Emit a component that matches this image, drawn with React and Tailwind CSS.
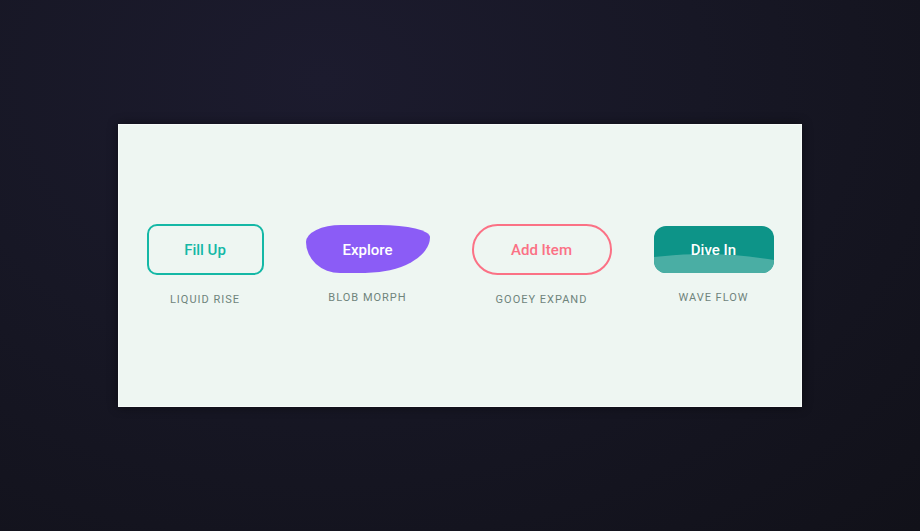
export default function App() {
  const label = "mt-[1px] text-[11px] leading-4 tracking-[1px] text-[#6f847c] uppercase";
  return (
    <div
      className="w-full h-[531px] flex items-center justify-center bg-[radial-gradient(ellipse_at_35%_15%,#1c1b2e_0%,#171725_45%,#111119_100%)]"
      style={{ fontFamily: 'Roboto, "Open Sans", sans-serif' }}
    >
      <div className="w-[684px] h-[283px] bg-[#eef6f2] border border-[#f7fbf9] shadow-[0_0_10px_rgba(0,0,0,0.45)] flex items-center justify-center gap-[42px]">
        <div className="flex flex-col items-center gap-4">
          <div className="w-[117px] h-[51px] pt-[2px] rounded-[10px] border-2 border-[#14b8a6] flex items-center justify-center text-[15px] font-medium text-[#14b8a6]">
            Fill Up
          </div>
          <div className={label}>Liquid Rise</div>
        </div>
        <div className="flex flex-col items-center gap-4">
          <div className="w-[124px] h-[48px] pt-[2px] bg-[#8b5cf6] rounded-[35px_50px_65px_34px/17px_12px_36px_31px] flex items-center justify-center text-[15px] font-medium text-white">
            Explore
          </div>
          <div className={label}>Blob Morph</div>
        </div>
        <div className="flex flex-col items-center gap-4">
          <div className="w-[140px] h-[51px] pt-[2px] rounded-full border-2 border-[#fb7185] flex items-center justify-center text-[15px] font-medium text-[#fb7185]">
            Add Item
          </div>
          <div className={label}>Gooey Expand</div>
        </div>
        <div className="flex flex-col items-center gap-4">
          <div className="relative w-[120px] h-[47px] pt-[2px] rounded-[12px] overflow-hidden bg-[#0d9488] flex items-center justify-center text-[15px] font-medium text-white">
            <svg className="absolute inset-0" width="120" height="47" viewBox="0 0 120 47">
              <path d="M0 31 Q 60 24 120 34 L120 47 L0 47 Z" fill="#4aaea4" />
            </svg>
            <span className="relative">Dive In</span>
          </div>
          <div className={label}>Wave Flow</div>
        </div>
      </div>
    </div>
  );
}
